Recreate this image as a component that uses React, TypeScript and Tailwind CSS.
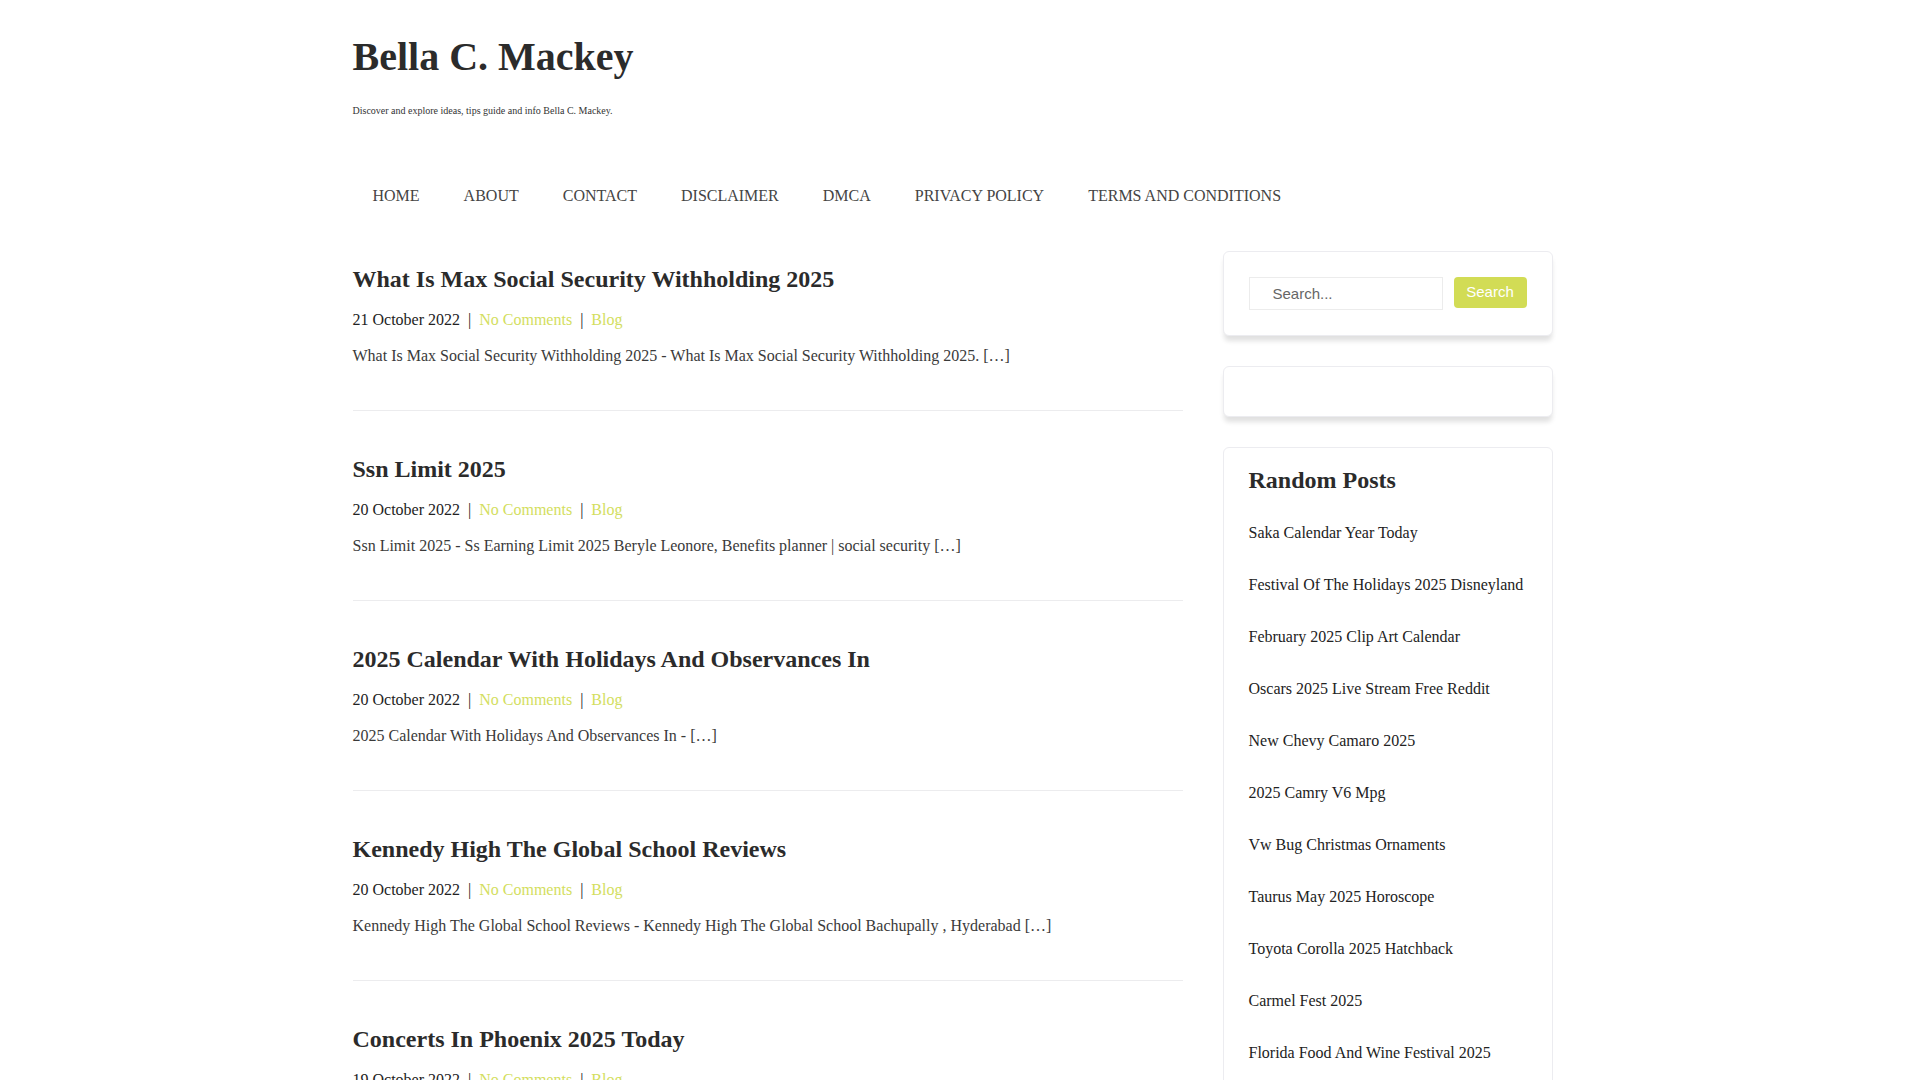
import React from 'react';

const navItems = ['HOME', 'ABOUT', 'CONTACT', 'DISCLAIMER', 'DMCA', 'PRIVACY POLICY', 'TERMS AND CONDITIONS'];

const posts = [
  {
    title: 'What Is Max Social Security Withholding 2025',
    date: '21 October 2022',
    excerpt: 'What Is Max Social Security Withholding 2025 - What Is Max Social Security Withholding 2025. […]',
  },
  {
    title: 'Ssn Limit 2025',
    date: '20 October 2022',
    excerpt: 'Ssn Limit 2025 - Ss Earning Limit 2025 Beryle Leonore, Benefits planner | social security […]',
  },
  {
    title: '2025 Calendar With Holidays And Observances In',
    date: '20 October 2022',
    excerpt: '2025 Calendar With Holidays And Observances In - […]',
  },
  {
    title: 'Kennedy High The Global School Reviews',
    date: '20 October 2022',
    excerpt: 'Kennedy High The Global School Reviews - Kennedy High The Global School Bachupally , Hyderabad […]',
  },
  {
    title: 'Concerts In Phoenix 2025 Today',
    date: '19 October 2022',
    excerpt: 'Concerts In Phoenix 2025 Today - […]',
  },
];

const randomPosts = [
  'Saka Calendar Year Today',
  'Festival Of The Holidays 2025 Disneyland',
  'February 2025 Clip Art Calendar',
  'Oscars 2025 Live Stream Free Reddit',
  'New Chevy Camaro 2025',
  '2025 Camry V6 Mpg',
  'Vw Bug Christmas Ornaments',
  'Taurus May 2025 Horoscope',
  'Toyota Corolla 2025 Hatchback',
  'Carmel Fest 2025',
  'Florida Food And Wine Festival 2025',
];

const serif = "font-['Liberation_Serif','Times_New_Roman',serif]";

export default function App() {
  return (
    <div className={`min-h-[4250px] pr-[15px] bg-white ${serif} text-[#333]`}>
      <div className="w-[1200px] mx-auto">
        {/* header */}
        <header className="pt-[35px]">
          <h1 className="text-[40px] leading-[44px] font-bold text-[#2b2b2b]">Bella C. Mackey</h1>
          <p className="mt-[26px] text-[10px] leading-[12px] text-[#333]">
            Discover and explore ideas, tips guide and info Bella C. Mackey.
          </p>
          <nav className="mt-[67px] flex gap-[4px]">
            {navItems.map((item) => (
              <a key={item} href="#" className="px-[20px] text-[16px] leading-[24px] text-[#444]">
                {item}
              </a>
            ))}
          </nav>
        </header>

        <div className="mt-[43px] flex justify-between items-start">
          {/* posts */}
          <main className="w-[830px] pt-[13px]">
            {posts.map((p) => (
              <article key={p.title} className="pb-[42px] mb-[43px] border-b border-[#ececee]">
                <h2 className="text-[24px] leading-[30px] font-bold text-[#2b2b2b]">{p.title}</h2>
                <div className="mt-[14px] flex text-[16px] leading-[24px]">
                  <span className="text-[#222]">{p.date}</span>
                  <span className="mx-[8px] text-[#222]">|</span>
                  <a href="#" className="text-[#d3de5e]">No Comments</a>
                  <span className="mx-[8px] text-[#222]">|</span>
                  <a href="#" className="text-[#d3de5e]">Blog</a>
                </div>
                <p className="mt-[12px] text-[16px] leading-[24px] text-[#3a3a3a]">{p.excerpt}</p>
              </article>
            ))}
          </main>

          {/* sidebar */}
          <aside className="w-[330px] flex flex-col gap-[30px]">
            <div className="border border-[#ececf0] rounded-[6px] bg-white p-[25px] shadow-[0_6px_5px_-1px_rgba(0,0,0,0.12)]">
              <form className="flex items-start" onSubmit={(e) => e.preventDefault()}>
                <input
                  type="text"
                  placeholder="Search..."
                  className="w-[194px] h-[33px] border border-[#ececec] pl-[23px] text-[15px] font-['Liberation_Sans',Arial,sans-serif] text-[#555] placeholder:text-[#666] outline-none"
                />
                <button
                  type="submit"
                  className="ml-[11px] w-[73px] h-[31px] rounded-[4px] bg-[#d2dc55] text-white text-[15px] font-['Liberation_Sans',Arial,sans-serif]"
                >
                  Search
                </button>
              </form>
            </div>

            <div className="h-[51px] border border-[#ececf0] rounded-[6px] bg-white shadow-[0_6px_5px_-1px_rgba(0,0,0,0.12)]" />

            <div className="border border-[#ececf0] rounded-[6px] bg-white px-[25px] pt-[20px] pb-[25px]">
              <h3 className="text-[24px] leading-[24px] font-bold text-[#2b2b2b]">Random Posts</h3>
              <ul className="mt-[15px]">
                {randomPosts.map((r) => (
                  <li key={r} className="py-[14px] text-[16px] leading-[24px] text-[#222]">
                    <a href="#">{r}</a>
                  </li>
                ))}
              </ul>
            </div>
          </aside>
        </div>
      </div>
    </div>
  );
}
